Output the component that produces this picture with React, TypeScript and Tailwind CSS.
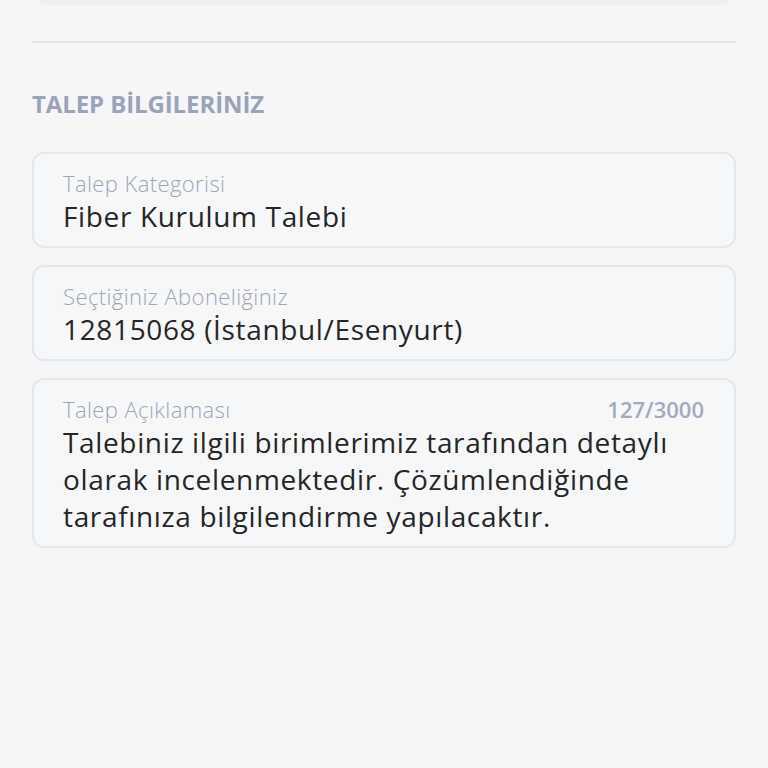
import React from 'react';

interface InfoFieldProps {
  label: string;
  value: string;
  counter?: string;
}

function InfoField({ label, value, counter }: InfoFieldProps) {
  return (
    <div className="rounded-[12px] border-2 border-[#e4e7ed] bg-[#f6f7f9] pl-[29px] pr-[30px] pt-[16px] pb-[11px]">
      <div className="flex items-center justify-between">
        <span className="text-[22px] font-light leading-[26px] tracking-[0.4px] text-[#9ea5b8]">{label}</span>
        {counter && (
          <span className="text-[22px] font-semibold leading-[26px] text-[#a4aabb]">{counter}</span>
        )}
      </div>
      <p className="mt-[2px] text-[28px] leading-[37px] tracking-[0.65px] text-[#262626]">{value}</p>
    </div>
  );
}

export default function App() {
  return (
    <div className="h-[768px] w-[768px] overflow-hidden bg-[#f5f6f8] font-['Open_Sans','Liberation_Sans',sans-serif]">
      <div className="mx-[40px] h-[5px] rounded-b-[6px] bg-[#eff0f3]" />
      <div className="mx-[32px] mt-[36px] h-[2px] bg-[#e2e4ea]" />

      <div className="px-[32px]">
        <h2 className="mt-[46px] text-[24px] font-bold leading-[30px] tracking-[-0.1px] text-[#9ba3b8]">
          TALEP BİLGİLERİNİZ
        </h2>

        <div className="mt-[33px] flex flex-col gap-[17px]">
          <InfoField label="Talep Kategorisi" value="Fiber Kurulum Talebi" />
          <InfoField label="Seçtiğiniz Aboneliğiniz" value="12815068 (İstanbul/Esenyurt)" />
          <InfoField
            label="Talep Açıklaması"
            counter="127/3000"
            value="Talebiniz ilgili birimlerimiz tarafından detaylı olarak incelenmektedir. Çözümlendiğinde tarafınıza bilgilendirme yapılacaktır."
          />
        </div>
      </div>
    </div>
  );
}
